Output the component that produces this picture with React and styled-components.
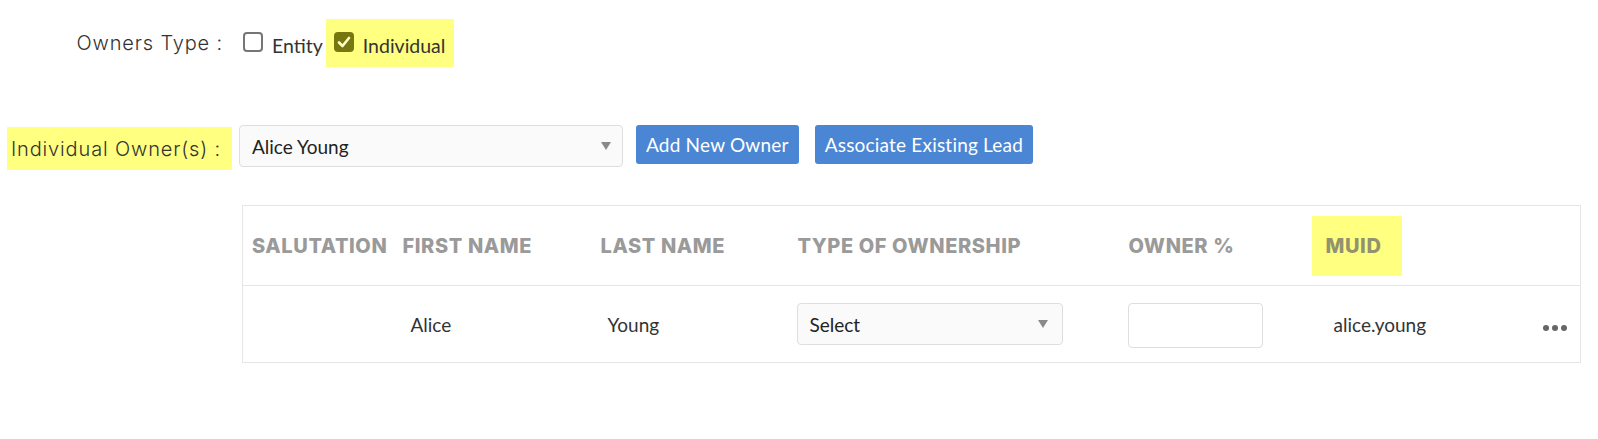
import React from "react"
import styled, { createGlobalStyle } from "styled-components"

const GlobalStyle = createGlobalStyle`
  body {
    margin: 0;
    background: #fff;
    font-family: "Lato", "Liberation Sans", sans-serif;
    color: #333;
  }
`

const highlight = "#ffff80"

const Page = styled.div`
  display: flex;
  flex-direction: column;
  padding-top: 19px;
`

const Row = styled.div`
  display: grid;
  grid-template-columns: 232px auto;
  align-items: ${p => p.align || "center"};
  margin-top: ${p => p.mt || 0}px;
`

const Label = styled.div`
  font-family: "Inter", "Liberation Sans", sans-serif;
  font-weight: 300;
  font-size: 20px;
  letter-spacing: 0.85px;
  color: #333;
  text-align: right;
  padding-right: ${p => p.pr || 9}px;
  margin-left: ${p => p.ml || 0}px;
  background: ${p => p.marked ? highlight : "transparent"};
  height: ${p => p.h || 48}px;
  display: flex;
  align-items: center;
  justify-content: flex-end;
  margin-top: ${p => p.mt || 0}px;
  white-space: nowrap;
`

const Options = styled.div`
  display: flex;
  align-items: center;
  padding-left: 11px;
`

const Option = styled.label`
  display: flex;
  align-items: center;
  gap: 9px;
  height: 48px;
  padding: 4px ${p => p.marked ? 9 : 0}px 0 ${p => p.marked ? 8 : 0}px;
  margin-left: ${p => p.marked ? 3 : 0}px;
  background: ${p => p.marked ? highlight : "transparent"};
  font-size: 19.5px;
  color: #333;
  box-sizing: border-box;
`

const Box = styled.span`
  width: 20px;
  height: 20px;
  box-sizing: border-box;
  border-radius: 4px;
  border: ${p => p.checked ? "none" : "2px solid #767676"};
  background: ${p => p.checked ? "#77770f" : "#fff"};
  display: flex;
  align-items: center;
  justify-content: center;
  margin-top: -6px;
`

const Controls = styled.div`
  display: flex;
  align-items: flex-start;
  padding-left: 7px;
`

const SelectBox = styled.div`
  position: relative;
  width: ${p => p.w}px;
  height: ${p => p.h || 42}px;
  box-sizing: border-box;
  border: 1px solid #dedede;
  border-radius: 4px;
  background: #fafafa;
  display: flex;
  align-items: center;
  padding-left: 12px;
  font-size: 19px;
  color: #222;
`

const Arrow = styled.span`
  position: absolute;
  right: ${p => p.r || 12}px;
  top: 50%;
  margin-top: -4px;
  width: 0;
  height: 0;
  border-left: 5px solid transparent;
  border-right: 5px solid transparent;
  border-top: 8px solid #8a8a8a;
`

const Button = styled.button`
  height: 39px;
  margin-left: ${p => p.ml}px;
  padding: 0 10px;
  border: none;
  border-radius: 3px;
  background: #4a86d4;
  color: #fff;
  font-family: "Lato", "Liberation Sans", sans-serif;
  font-size: 19px;
  letter-spacing: 0.2px;
  cursor: pointer;
`

const TableWrap = styled.div`
  margin: 35px 0 0 242px;
  width: 1338px;
`

const Table = styled.table`
  width: 100%;
  border-collapse: collapse;
  border: 1px solid #e6e6e6;
  table-layout: fixed;
`

const Th = styled.th`
  height: 79px;
  text-align: left;
  vertical-align: middle;
  padding: 0 0 0 9px;
  font-family: "Inter", "Liberation Sans", sans-serif;
  font-weight: 800;
  font-size: 20px;
  letter-spacing: 0.6px;
  color: #9a9a9a;
  border-bottom: 1px solid #e6e6e6;
  white-space: nowrap;
`

const Marked = styled.span`
  display: inline-block;
  background: ${highlight};
  color: #929270;
  padding: 18px 21px 18px 14px;
  margin-left: -14px;
`

const Td = styled.td`
  height: 76px;
  vertical-align: middle;
  padding: 0 0 0 ${p => p.indent || 8}px;
  font-size: 19px;
  color: #333;
`

const Input = styled.input`
  width: 135px;
  height: 45px;
  box-sizing: border-box;
  border: 1px solid #dedede;
  border-radius: 4px;
  background: #fff;
  margin-top: 2px;
`

const Dots = () => (
  <svg width="26" height="8" viewBox="0 0 26 8">
    <circle cx="4" cy="4" r="3" fill="#666" />
    <circle cx="13" cy="4" r="3" fill="#666" />
    <circle cx="22" cy="4" r="3" fill="#666" />
  </svg>
)

const Check = () => (
  <svg width="14" height="12" viewBox="0 0 14 12">
    <path d="M2 6.5 L5.5 10 L12 2" stroke="#ffffc8" strokeWidth="2.6" fill="none" strokeLinecap="round" strokeLinejoin="round" />
  </svg>
)

const columns = [
  { title: "SALUTATION", width: 151 },
  { title: "FIRST NAME", width: 198 },
  { title: "LAST NAME", width: 197 },
  { title: "TYPE OF OWNERSHIP", width: 331 },
  { title: "OWNER %", width: 197 },
  { title: "MUID", width: 214, marked: true },
  { title: "", width: 50 },
]

export default function App() {
  return (
    <Page>
      <GlobalStyle />
      <Row>
        <Label>Owners Type :</Label>
        <Options>
          <Option>
            <Box />
            Entity
          </Option>
          <Option marked>
            <Box checked><Check /></Box>
            Individual
          </Option>
        </Options>
      </Row>

      <Row mt={58} align="start">
        <Label marked ml={7} pr={11} h={43} mt={2}>Individual Owner(s) :</Label>
        <Controls>
          <SelectBox w={384}>
            Alice Young
            <Arrow r={11} />
          </SelectBox>
          <Button ml={13}>Add New Owner</Button>
          <Button ml={16}>Associate Existing Lead</Button>
        </Controls>
      </Row>

      <TableWrap>
        <Table>
          <colgroup>
            {columns.map((c, i) => <col key={i} style={{ width: c.width }} />)}
          </colgroup>
          <thead>
            <tr>
              {columns.map((c, i) =>
                <Th key={i}>{c.marked ? <Marked>{c.title}</Marked> : c.title}</Th>
              )}
            </tr>
          </thead>
          <tbody>
            <tr>
              <Td indent={17}></Td>
              <Td indent={17}>Alice</Td>
              <Td indent={16}>Young</Td>
              <Td>
                <SelectBox w={266}>
                  Select
                  <Arrow r={14} />
                </SelectBox>
              </Td>
              <Td><Input /></Td>
              <Td indent={17}>alice.young</Td>
              <Td indent={11}><Dots /></Td>
            </tr>
          </tbody>
        </Table>
      </TableWrap>
    </Page>
  )
}
